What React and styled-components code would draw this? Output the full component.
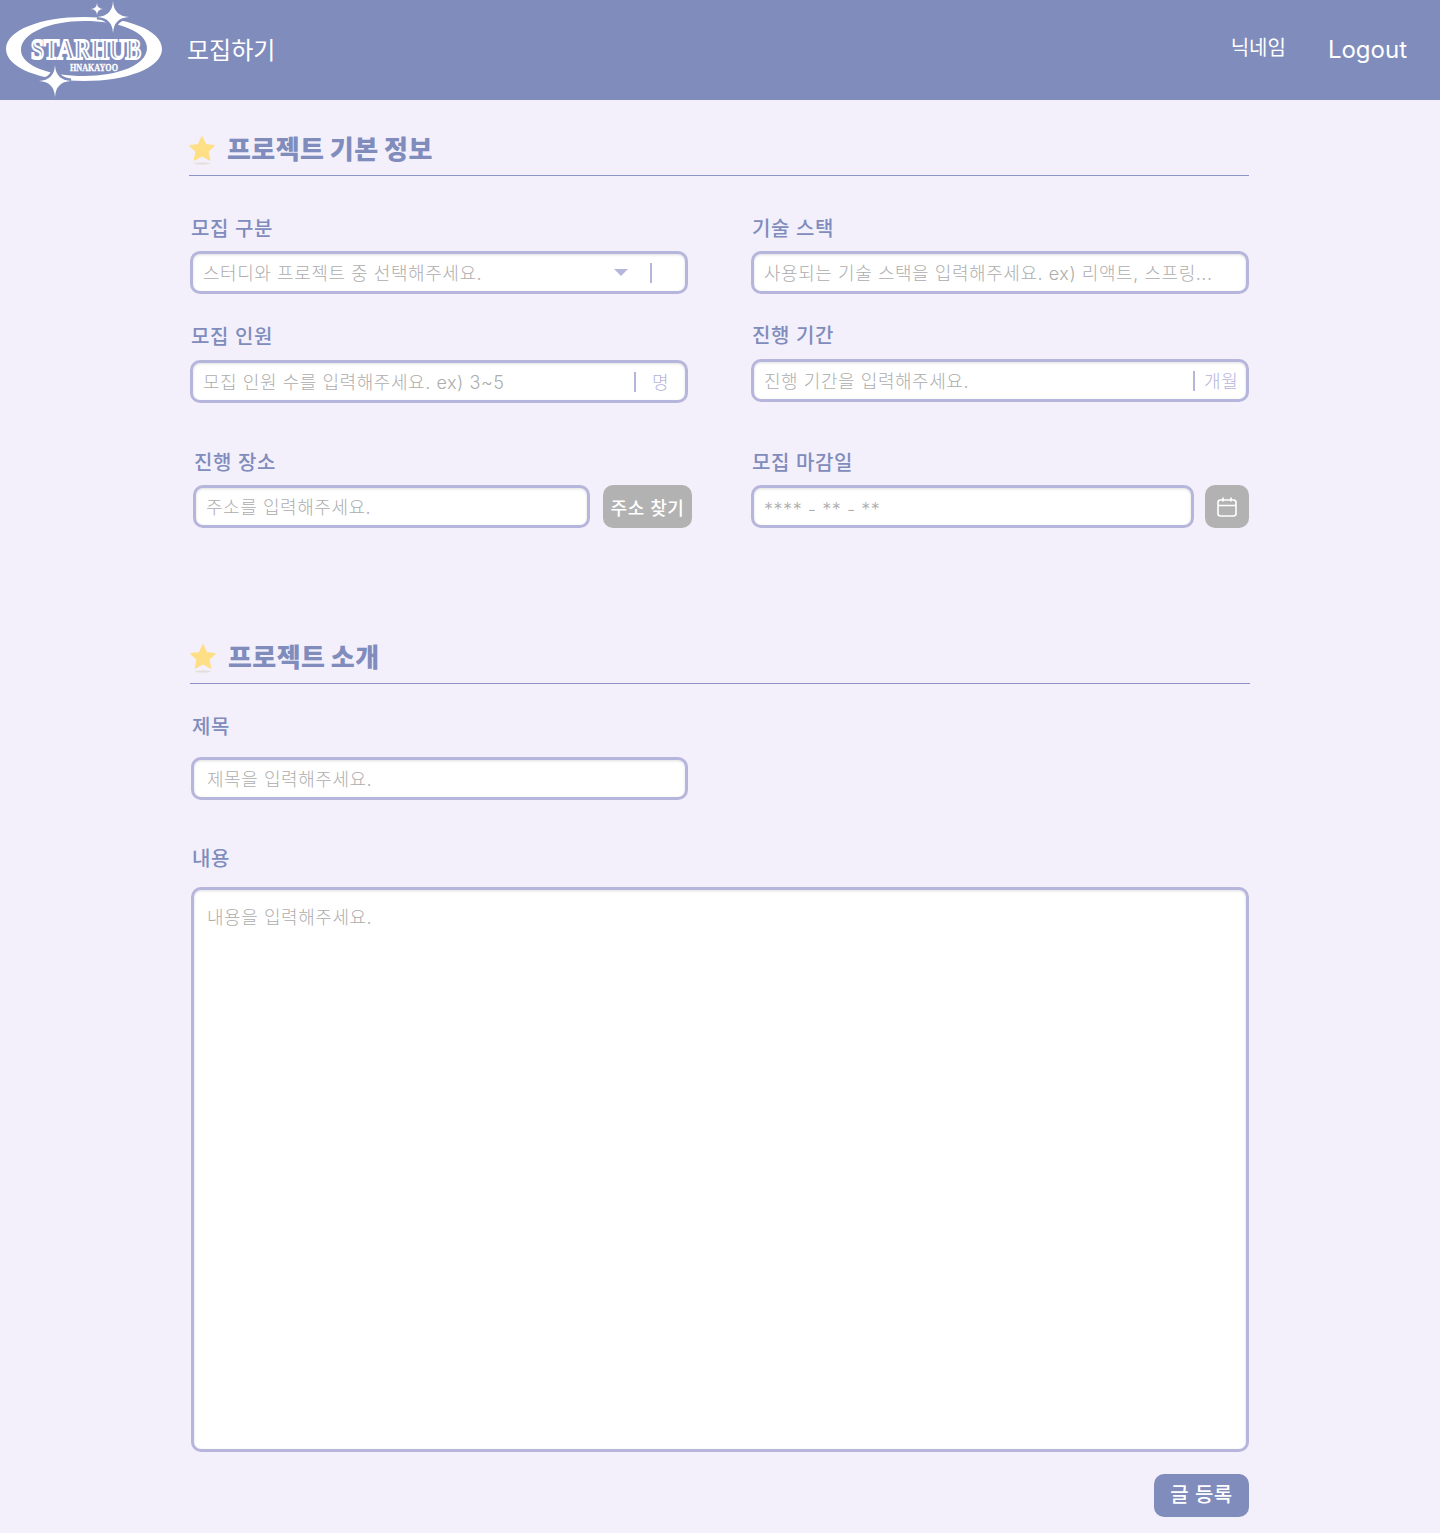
import styled, { createGlobalStyle } from 'styled-components';

const INDIGO = '#7f8cbc';
const LILAC = '#b6b5dc';

const GlobalStyle = createGlobalStyle`
  * {
    box-sizing: border-box;
  }
  body {
    margin: 0;
    background: #f3f0fb;
    font-family: Inter, 'Noto Sans CJK KR', sans-serif;
  }
`;

function Logo() {
  const sparkle = (x, y, r) =>
    `M${x} ${y - r}Q${x + r * 0.05} ${y - r * 0.05} ${x + r} ${y}Q${x + r * 0.05} ${y + r * 0.05} ${x} ${y + r}Q${x - r * 0.05} ${y + r * 0.05} ${x - r} ${y}Q${x - r * 0.05} ${y - r * 0.05} ${x} ${y - r}Z`;
  return (
    <LogoSvg viewBox="0 0 170 100" aria-label="STARHUB">
      <path
        fillRule="evenodd"
        fill="#fff"
        d="M6 49C6 30 41 17 84 17S162 30 162 49 127 81 84 81 6 68 6 49ZM21 50C21 66 50 76 84 76S147 65 147 48 118 21 84 21 21 33 21 50Z"
      />
      <path d={sparkle(113, 17, 16)} fill="#fff" stroke={INDIGO} strokeWidth="5" paintOrder="stroke" />
      <path d={sparkle(97, 9, 6)} fill="#fff" />
      <path d={sparkle(55, 81, 16)} fill="#fff" stroke={INDIGO} strokeWidth="5" paintOrder="stroke" />
      <text
        x="31"
        y="59"
        textLength="110"
        lengthAdjust="spacingAndGlyphs"
        fontFamily="'Liberation Serif', serif"
        fontWeight="700"
        fontSize="29"
        fill={INDIGO}
        stroke="#fff"
        strokeWidth="2.2"
      >
        STARHUB
      </text>
      <text
        x="70"
        y="71"
        textLength="48"
        lengthAdjust="spacingAndGlyphs"
        fontFamily="'Liberation Serif', serif"
        fontWeight="700"
        fontSize="10"
        fill="#fff"
        stroke="#fff"
        strokeWidth="0.3"
      >
        HNAKAYOO
      </text>
    </LogoSvg>
  );
}

function StarIcon() {
  return (
    <StarSvg viewBox="0 0 26 30">
      <ellipse cx="13" cy="27.5" rx="8" ry="1.2" fill="#e2e0dc" />
      <path
        d="M13 1l3.6 7.7 8.4 1-6.2 5.8 1.7 8.4L13 19.7 5.5 23.9l1.7-8.4L1 9.7l8.4-1z"
        fill="#ffdf85"
        stroke="#ffdf85"
        strokeLinejoin="round"
        strokeWidth="1.5"
      />
    </StarSvg>
  );
}

function CalendarIcon() {
  return (
    <svg width="22" height="22" viewBox="0 0 22 22" fill="none" stroke="#fff" strokeWidth="1.6">
      <rect x="2" y="4" width="18" height="16" rx="2.5" />
      <path d="M2 9.5h18M7 1.5v4M15 1.5v4" />
    </svg>
  );
}

function App() {
  return (
    <>
      <GlobalStyle />
      <Header>
        <Brand>
          <Logo />
          <NavLink>모집하기</NavLink>
        </Brand>
        <UserMenu>
          <Nickname>닉네임</Nickname>
          <NavLink>Logout</NavLink>
        </UserMenu>
      </Header>
      <Main>
        <BasicSection>
          <SectionHead>
            <StarIcon />
            <SectionTitle>프로젝트 기본 정보</SectionTitle>
          </SectionHead>
          <BasicGrid>
            <Field>
              <Label $gap={9}>모집 구분</Label>
              <InputBox>
                <TextInput readOnly placeholder="스터디와 프로젝트 중 선택해주세요." />
                <Caret />
                <Divider $left={22} $right={33} />
              </InputBox>
            </Field>
            <Field>
              <Label $gap={9}>기술 스택</Label>
              <InputBox>
                <TextInput placeholder="사용되는 기술 스택을 입력해주세요. ex) 리액트, 스프링..." />
              </InputBox>
            </Field>
            <Field $top={30}>
              <Label>모집 인원</Label>
              <InputBox>
                <TextInput placeholder="모집 인원 수를 입력해주세요. ex) 3~5" />
                <Divider $right={16} />
                <Unit $width={33}>명</Unit>
              </InputBox>
            </Field>
            <Field $top={29}>
              <Label>진행 기간</Label>
              <InputBox>
                <TextInput placeholder="진행 기간을 입력해주세요." />
                <Divider $right={9} />
                <Unit $width={42}>개월</Unit>
              </InputBox>
            </Field>
            <Field $top={47} $left={4}>
              <Label $gap={9}>진행 장소</Label>
              <InlineRow $gap={13}>
                <InputBox $width={397}>
                  <TextInput placeholder="주소를 입력해주세요." />
                </InputBox>
                <GrayButton type="button" $width={89}>주소 찾기</GrayButton>
              </InlineRow>
            </Field>
            <Field $top={47}>
              <Label $gap={9}>모집 마감일</Label>
              <InlineRow $gap={11}>
                <InputBox $width={443}>
                  <TextInput $nudge={5} placeholder="**** - ** - **" />
                </InputBox>
                <GrayButton type="button" $width={44} aria-label="달력">
                  <CalendarIcon />
                </GrayButton>
              </InlineRow>
            </Field>
          </BasicGrid>
        </BasicSection>

        <IntroSection>
          <SectionHead>
            <StarIcon />
            <SectionTitle>프로젝트 소개</SectionTitle>
          </SectionHead>
          <IntroBody>
            <Field $width={498}>
              <Label $gap={17}>제목</Label>
              <InputBox>
                <TextInput $pad={13} placeholder="제목을 입력해주세요." />
              </InputBox>
            </Field>
            <ContentField>
              <Label $gap={15}>내용</Label>
              <TextArea placeholder="내용을 입력해주세요." />
            </ContentField>
            <SubmitRow>
              <SubmitButton type="button">글 등록</SubmitButton>
            </SubmitRow>
          </IntroBody>
        </IntroSection>
      </Main>
    </>
  );
}

const Header = styled.header`
  height: 100px;
  background: ${INDIGO};
  display: flex;
  align-items: center;
  justify-content: space-between;
  padding-right: 33px;
  color: #fff;
`;

const Brand = styled.div`
  display: flex;
  align-items: center;
  gap: 17px;
`;

const LogoSvg = styled.svg`
  width: 170px;
  height: 100px;
  display: block;
`;

const NavLink = styled.span`
  font-size: 24px;
  line-height: 29px;
`;

const UserMenu = styled.div`
  display: flex;
  align-items: center;
  gap: 42px;
  margin-top: -2px;
`;

const Nickname = styled.span`
  font-size: 20px;
  line-height: 24px;
  margin-top: -2px;
`;

const Main = styled.main`
  width: 1061px;
  margin-left: 189px;
  padding: 33px 0 16px;
`;

const BasicSection = styled.section`
  padding-right: 1px;
`;

const SectionHead = styled.div`
  height: 43px;
  display: flex;
  align-items: flex-start;
  gap: 12px;
  border-bottom: 1px solid #8a94c6;
`;

const StarSvg = styled.svg`
  width: 26px;
  height: 30px;
  margin-top: 3px;
  flex: none;
`;

const SectionTitle = styled.h2`
  margin: 1px 0 0;
  font-size: 26px;
  line-height: 32px;
  font-weight: 900;
  letter-spacing: 0.4px;
  color: ${INDIGO};
`;

const BasicGrid = styled.div`
  display: grid;
  grid-template-columns: 499px 499px;
  column-gap: 62px;
  padding-top: 40px;
`;

const Field = styled.div`
  margin-top: ${p => p.$top || 0}px;
  padding-left: ${p => p.$left || 1}px;
  width: ${p => (p.$width ? `${p.$width}px` : 'auto')};
`;

const Label = styled.div`
  font-size: 20px;
  line-height: 26px;
  font-weight: 500;
  letter-spacing: 0.6px;
  color: ${INDIGO};
  padding-left: 1px;
  margin-bottom: ${p => p.$gap || 10}px;
`;

const InputBox = styled.div`
  width: ${p => (p.$width ? `${p.$width}px` : 'auto')};
  flex: none;
  height: 43px;
  display: flex;
  align-items: center;
  background: #fff;
  border: 3px solid ${LILAC};
  border-radius: 10px;
  box-shadow: inset 0 1px 3px rgba(0, 0, 0, 0.12);
`;

const TextInput = styled.input`
  flex: 1;
  min-width: 0;
  height: 100%;
  padding: ${p => p.$nudge || 2}px 0 0 ${p => p.$pad || 10}px;
  border: 0;
  outline: 0;
  background: transparent;
  font: 300 18px Inter, 'Noto Sans CJK KR', sans-serif;
  letter-spacing: 0.55px;
  &::placeholder {
    color: #adadad;
    opacity: 1;
  }
`;

const Caret = styled.span`
  width: 0;
  height: 0;
  border-left: 7px solid transparent;
  border-right: 7px solid transparent;
  border-top: 7px solid ${LILAC};
`;

const Divider = styled.span`
  width: 2px;
  height: 20px;
  background: ${LILAC};
  margin-left: ${p => p.$left || 0}px;
  margin-right: ${p => p.$right}px;
`;

const Unit = styled.span`
  width: ${p => p.$width}px;
  margin-top: -2px;
  font-size: 18px;
  font-weight: 300;
  letter-spacing: 0.6px;
  white-space: nowrap;
  color: ${LILAC};
`;

const InlineRow = styled.div`
  display: flex;
  gap: ${p => p.$gap}px;
`;

const GrayButton = styled.button`
  width: ${p => p.$width}px;
  flex: none;
  height: 43px;
  display: flex;
  align-items: center;
  justify-content: center;
  padding: 0;
  border: 0;
  border-radius: 10px;
  background: #b2b2b2;
  color: #fff;
  font: 500 18px Inter, 'Noto Sans CJK KR', sans-serif;
  letter-spacing: 0.6px;
`;

const IntroSection = styled.section`
  margin-top: 113px;
  padding-left: 1px;
`;

const IntroBody = styled.div`
  padding-top: 30px;
`;

const ContentField = styled.div`
  margin-top: 46px;
  padding-left: 1px;
  width: 1059px;
`;

const TextArea = styled.textarea`
  display: block;
  width: 100%;
  height: 565px;
  padding: 13px;
  resize: none;
  outline: 0;
  background: #fff;
  border: 3px solid ${LILAC};
  border-radius: 10px;
  box-shadow: inset 0 1px 3px rgba(0, 0, 0, 0.12);
  font: 300 18px Inter, 'Noto Sans CJK KR', sans-serif;
  letter-spacing: 0.55px;
  &::placeholder {
    color: #adadad;
    opacity: 1;
  }
`;

const SubmitRow = styled.div`
  display: flex;
  justify-content: flex-end;
  width: 1059px;
  margin-top: 22px;
`;

const SubmitButton = styled.button`
  width: 95px;
  height: 43px;
  padding: 0 0 5px;
  border: 0;
  border-radius: 10px;
  background: ${INDIGO};
  color: #fff;
  font: 500 20px Inter, 'Noto Sans CJK KR', sans-serif;
  letter-spacing: 0.5px;
`;

export default App;
